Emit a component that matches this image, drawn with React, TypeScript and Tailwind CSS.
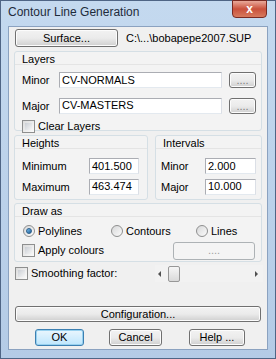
import React from "react";

const font = { fontFamily: '"Liberation Sans", Arial, sans-serif' };

function Btn({ children, className = "", focused = false, disabled = false }: { children?: React.ReactNode; className?: string; focused?: boolean; disabled?: boolean }) {
  return (
    <div
      className={`flex items-center justify-center rounded-[3px] border text-[11px] ${
        focused
          ? "border-[#3c7fb1] bg-gradient-to-b from-[#eaf6fd] to-[#bee6fd] shadow-[inset_0_0_0_1px_#98d1ef]"
          : disabled
          ? "border-[#adb2b5] bg-[#f4f4f4] text-[#a0a0a0]"
          : "border-[#707070] bg-gradient-to-b from-[#f2f2f2] via-[#ebebeb] to-[#cfcfcf] shadow-[inset_0_0_0_1px_#fcfcfc]"
      } ${className}`}
    >
      {children}
    </div>
  );
}

function Input({ value, className = "" }: { value: string; className?: string }) {
  return (
    <div className={`h-[16px] bg-white border border-[#abadb3] border-b-[#e3e9ef] border-r-[#dbdfe6] pl-[2px] flex items-center text-[11px] leading-none ${className}`}>
      {value}
    </div>
  );
}

function Check({ className = "" }: { className?: string }) {
  return (
    <div className={`w-[13px] h-[13px] border border-[#8e8f8f] bg-gradient-to-br from-[#dcdcdc] to-[#fbfbfb] p-[2px] ${className}`}>
      <div className="w-full h-full bg-gradient-to-br from-[#cbcfd5] to-[#f6f6f6]" />
    </div>
  );
}

function Radio({ on = false }: { on?: boolean }) {
  return (
    <div className="w-[12px] h-[12px] rounded-full border border-[#8e8f8f] bg-gradient-to-br from-[#d7d8d9] to-[#fbfbfb] flex items-center justify-center">
      {on && <div className="w-[6px] h-[6px] rounded-full bg-gradient-to-br from-[#7cc2f3] to-[#1b5d95] border border-[#2a5e8a]" />}
    </div>
  );
}

function Group({ label, className = "", children }: { label: string; className?: string; children?: React.ReactNode }) {
  return (
    <div className={`border border-[#d5dfe5] rounded-[3px] bg-[#f3f3f3] flex flex-col ${className}`}>
      <div className="h-[12px] mt-[1px] pl-[7px] text-[11px] leading-[12px] border-b border-[#e4e4e4]">{label}</div>
      {children}
    </div>
  );
}

export default function App() {
  return (
    <div className="w-[276px] h-[359px] bg-gradient-to-b from-[#c4d9ef] to-[#b4cbe6] border border-[#4f6585] flex flex-col text-black" style={font}>
      {/* Title bar */}
      <div className="h-[25px] flex items-start">
        <div className="pl-[7px] pt-[4px] text-[12px] leading-[14px] text-[#1e2b3b]">Contour Line Generation</div>
        <div className="ml-auto mr-[8px] -mt-[1px] w-[35px] h-[18px] rounded-b-[4px] border border-[#7a2a22] bg-gradient-to-b from-[#e8a89a] via-[#c9503c] to-[#d77a5e] flex items-center justify-center text-white text-[12px] font-bold leading-none">
          x
        </div>
      </div>

      {/* Client area */}
      <div className="mx-[7px] mb-[8px] flex-1 bg-[#f0f0f0] border border-[#8ba2c0] flex flex-col">
        {/* Surface */}
        <div className="mt-[2px] ml-[6px] flex items-center">
          <Btn className="w-[103px] h-[18px]">Surface...</Btn>
          <span className="ml-[8px] text-[11px]">C:\...\bobapepe2007.SUP</span>
        </div>

        {/* Layers */}
        <Group label="Layers" className="mt-[4px] mx-[5px] h-[80px]">
          <div className="mt-[7px] flex items-center pl-[7px]">
            <span className="w-[37px] text-[11px]">Minor</span>
            <Input value="CV-NORMALS" className="w-[163px]" />
            <Btn className="ml-[7px] w-[27px] h-[16px] text-[9px] text-[#808080]">....</Btn>
          </div>
          <div className="mt-[9px] flex items-center pl-[7px]">
            <span className="w-[37px] text-[11px]">Major</span>
            <Input value="CV-MASTERS" className="w-[163px]" />
            <Btn className="ml-[7px] w-[27px] h-[16px] text-[9px] text-[#808080]">....</Btn>
          </div>
          <div className="mt-[4px] flex items-center pl-[7px]">
            <Check />
            <span className="ml-[3px] text-[11px]">Clear Layers</span>
          </div>
        </Group>

        {/* Heights / Intervals */}
        <div className="mt-[4px] mx-[5px] flex gap-[7px] h-[65px]">
          <Group label="Heights" className="w-[134px]">
            <div className="mt-[9px] flex items-center pl-[7px]">
              <span className="w-[67px] text-[11px]">Minimum</span>
              <Input value="401.500" className="w-[50px]" />
            </div>
            <div className="mt-[4px] flex items-center pl-[7px]">
              <span className="w-[67px] text-[11px]">Maximum</span>
              <Input value="463.474" className="w-[50px]" />
            </div>
          </Group>
          <Group label="Intervals" className="flex-1">
            <div className="mt-[9px] flex items-center pl-[5px]">
              <span className="w-[44px] text-[11px]">Minor</span>
              <Input value="2.000" className="w-[51px]" />
            </div>
            <div className="mt-[4px] flex items-center pl-[5px]">
              <span className="w-[44px] text-[11px]">Major</span>
              <Input value="10.000" className="w-[51px]" />
            </div>
          </Group>
        </div>

        {/* Draw as */}
        <Group label="Draw as" className="mt-[3px] mx-[5px] h-[59px]">
          <div className="mt-[6px] flex items-center pl-[8px] text-[11px]">
            <div className="w-[88px] flex items-center gap-[3px]">
              <Radio on />
              <span>Polylines</span>
            </div>
            <div className="w-[85px] flex items-center gap-[3px]">
              <Radio />
              <span>Contours</span>
            </div>
            <div className="flex items-center gap-[3px]">
              <Radio />
              <span>Lines</span>
            </div>
          </div>
          <div className="mt-[2px] flex items-center pl-[7px]">
            <Check />
            <span className="ml-[3px] text-[11px]">Apply colours</span>
            <Btn disabled className="ml-auto mr-[6px] w-[82px] h-[18px] text-[9px]">....</Btn>
          </div>
        </Group>

        {/* Smoothing */}
        <div className="mt-[3px] flex items-center pl-[6px] pr-[4px]">
          <Check />
          <span className="ml-[3px] text-[11px]">Smoothing factor:</span>
          <div className="ml-auto w-[108px] h-[17px] bg-[#f2f2f2] flex items-center">
            <span className="ml-[3px] w-0 h-0 border-y-[3px] border-y-transparent border-r-[3px] border-r-[#505050]" />
            <div className="ml-[7px] w-[12px] h-[16px] rounded-[2px] border border-[#979797] bg-gradient-to-b from-[#f6f6f6] to-[#d9d9d9]" />
            <span className="ml-auto mr-[5px] w-0 h-0 border-y-[3px] border-y-transparent border-l-[3px] border-l-[#505050]" />
          </div>
        </div>

        {/* Configuration */}
        <Btn className="mt-[24px] mx-[6px] h-[16px]">Configuration...</Btn>

        {/* Buttons */}
        <div className="mt-[7px] flex items-center pl-[26px]">
          <Btn focused className="w-[49px] h-[17px]">OK</Btn>
          <Btn className="ml-[25px] w-[53px] h-[17px]">Cancel</Btn>
          <Btn className="ml-[27px] w-[56px] h-[17px]">Help ...</Btn>
        </div>
      </div>
    </div>
  );
}
